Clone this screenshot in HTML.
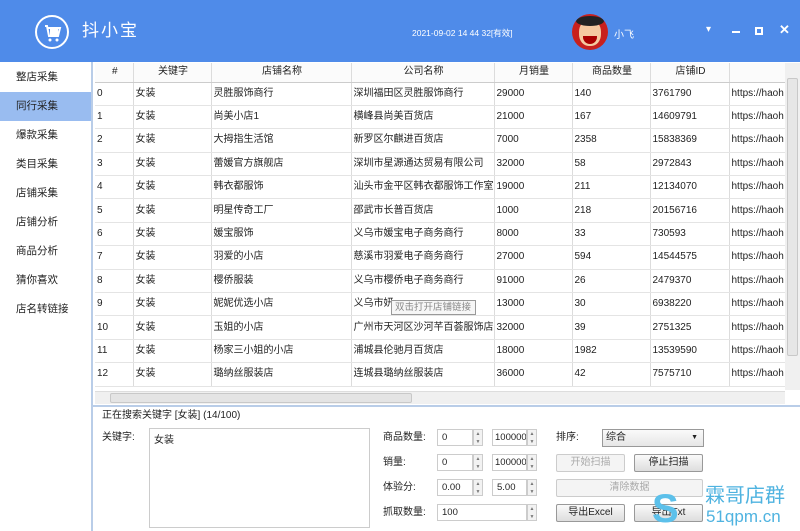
<!DOCTYPE html>
<html><head><meta charset="utf-8"><style>
*{margin:0;padding:0;box-sizing:border-box}
body{width:800px;height:531px;overflow:hidden;background:#fff;font-family:"Liberation Sans","Noto Sans CJK SC",sans-serif;font-size:10px;color:#222;position:relative}
.hdr{position:absolute;left:0;top:0;width:800px;height:62px;background:#4f8be9}
.abs{position:absolute}
.side{position:absolute;left:0;top:62px;width:93px;height:469px;background:#fff;border-right:2px solid #b9cde8}
.side div{height:29px;line-height:29px;padding-left:16px;font-size:10.5px}
.side .sel{background:#99bcf0}
table{border-collapse:collapse;position:absolute;left:95px;top:63px;table-layout:fixed}
td,th{height:23.4px;line-height:14px;vertical-align:middle;border-right:1px solid #dcdcdc;border-bottom:1px solid #e4e4e4;padding:0 0 0 2px;white-space:nowrap;overflow:hidden;font-weight:normal;font-size:10px;text-align:left}
th{height:19px;text-align:center;background:#fbfbfb;border-bottom:1px solid #ccc}
.inp{position:absolute;height:17px;border:1px solid #ccc;background:#fff;font-size:9.5px;padding-left:4px;line-height:15px;overflow:hidden;white-space:nowrap}
.spin{position:absolute;width:10px;height:17px;border:1px solid #ccc;background:#f2f2f2;font-size:5px;color:#777;text-align:center;line-height:8px}
.btn{position:absolute;height:18px;border:1px solid #999;border-radius:2px;background:linear-gradient(#fafafa,#ddd);text-align:center;line-height:16px;font-size:10px}
.dis{color:#aaa;border-color:#ccc;background:#f4f4f4}
.lbl{position:absolute;font-size:10px;line-height:12px}
</style></head><body>
<div class="hdr">
 <svg class="abs" style="left:33px;top:13px" width="38" height="38" viewBox="0 0 38 38"><circle cx="19" cy="19" r="16" fill="none" stroke="#fff" stroke-width="2"/><path d="M12 13h2l2 10h9l2-8H15" fill="none" stroke="#fff" stroke-width="2"/><rect x="17" y="14" width="8" height="8" fill="#fff"/><circle cx="17" cy="27" r="1.5" fill="#fff"/><circle cx="24" cy="27" r="1.5" fill="#fff"/></svg>
 <div class="abs" style="left:82px;top:21px;color:#fff;font-size:17px;letter-spacing:2px;line-height:20px">抖小宝</div>
 <div class="abs" style="left:412px;top:27px;color:#fff;font-size:8.5px">2021-09-02 14 44 32[有效]</div>
 <div class="abs" style="left:572px;top:14px;width:36px;height:36px;border-radius:50%;background:#c8201e;overflow:hidden"><div style="position:absolute;left:7px;top:6px;width:22px;height:26px;border-radius:45%;background:#f5c9a0"></div><div style="position:absolute;left:4px;top:2px;width:28px;height:10px;border-radius:50%;background:#222"></div><div style="position:absolute;left:11px;top:22px;width:14px;height:8px;border-radius:0 0 7px 7px;background:#a00"></div></div>
 <div class="abs" style="left:614px;top:26px;color:#fff;font-size:10px">小飞</div>
 <div class="abs" style="left:706px;top:24px;color:#fff;font-size:10px">▾</div>
 <div class="abs" style="left:732px;top:31px;width:8px;height:2px;background:#fff"></div>
 <div class="abs" style="left:755px;top:27px;width:8px;height:8px;border:2px solid #fff"></div>
 <div class="abs" style="left:779px;top:22px;color:#fff;font-size:13px;font-weight:bold">✕</div>
</div>
<div class="side" style="padding-top:1px">
 <div>整店采集</div><div class="sel">同行采集</div><div>爆款采集</div><div>类目采集</div><div>店铺采集</div><div>店铺分析</div><div>商品分析</div><div>猜你喜欢</div><div>店名转链接</div>
</div>
<table>
<colgroup><col style="width:38px"><col style="width:78px"><col style="width:140px"><col style="width:141px"><col style="width:78px"><col style="width:78px"><col style="width:79px"><col style="width:58px"></colgroup>
<tr><th>#</th><th>关键字</th><th>店铺名称</th><th>公司名称</th><th>月销量</th><th>商品数量</th><th>店铺ID</th><th style="border-right:none"></th></tr>
<tr><td>0</td><td>女装</td><td>灵胜服饰商行</td><td>深圳福田区灵胜服饰商行</td><td>29000</td><td>140</td><td>3761790</td><td>https://haoh</td></tr>
<tr><td>1</td><td>女装</td><td>尚美小店1</td><td>横峰县尚美百货店</td><td>21000</td><td>167</td><td>14609791</td><td>https://haoh</td></tr>
<tr><td>2</td><td>女装</td><td>大拇指生活馆</td><td>新罗区尔麒进百货店</td><td>7000</td><td>2358</td><td>15838369</td><td>https://haoh</td></tr>
<tr><td>3</td><td>女装</td><td>蕾媛官方旗舰店</td><td>深圳市星源通达贸易有限公司</td><td>32000</td><td>58</td><td>2972843</td><td>https://haoh</td></tr>
<tr><td>4</td><td>女装</td><td>韩衣都服饰</td><td>汕头市金平区韩衣都服饰工作室</td><td>19000</td><td>211</td><td>12134070</td><td>https://haoh</td></tr>
<tr><td>5</td><td>女装</td><td>明星传奇工厂</td><td>邵武市长普百货店</td><td>1000</td><td>218</td><td>20156716</td><td>https://haoh</td></tr>
<tr><td>6</td><td>女装</td><td>媛宝服饰</td><td>义乌市媛宝电子商务商行</td><td>8000</td><td>33</td><td>730593</td><td>https://haoh</td></tr>
<tr><td>7</td><td>女装</td><td>羽爱的小店</td><td>慈溪市羽爱电子商务商行</td><td>27000</td><td>594</td><td>14544575</td><td>https://haoh</td></tr>
<tr><td>8</td><td>女装</td><td>樱侨服装</td><td>义乌市樱侨电子商务商行</td><td>91000</td><td>26</td><td>2479370</td><td>https://haoh</td></tr>
<tr><td>9</td><td>女装</td><td>妮妮优选小店</td><td>义乌市妍</td><td>13000</td><td>30</td><td>6938220</td><td>https://haoh</td></tr>
<tr><td>10</td><td>女装</td><td>玉姐的小店</td><td>广州市天河区沙河芊百荟服饰店</td><td>32000</td><td>39</td><td>2751325</td><td>https://haoh</td></tr>
<tr><td>11</td><td>女装</td><td>杨家三小姐的小店</td><td>浦城县伦驰月百货店</td><td>18000</td><td>1982</td><td>13539590</td><td>https://haoh</td></tr>
<tr><td>12</td><td>女装</td><td>璐纳丝服装店</td><td>连城县璐纳丝服装店</td><td>36000</td><td>42</td><td>7575710</td><td>https://haoh</td></tr>
</table>
<div class="abs" style="left:391px;top:300px;width:85px;height:15px;border:1px solid #999;background:#f6f6f6;color:#888;font-size:9.5px;padding-left:3px;line-height:13px">双击打开店铺链接</div>
<div class="abs" style="left:785px;top:63px;width:15px;height:327px;background:#f0f0f0"><div style="position:absolute;left:2px;top:15px;width:11px;height:278px;background:#e6e6e6;border:1px solid #c8c8c8;border-radius:2px"></div></div>
<div class="abs" style="left:95px;top:391px;width:690px;height:13px;background:#f0f0f0;border-top:1px solid #ddd"><div style="position:absolute;left:15px;top:1px;width:302px;height:10px;background:#e4e4e4;border:1px solid #c8c8c8;border-radius:2px"></div></div>
<div class="abs" style="left:93px;top:405px;width:707px;height:2px;background:#b9cde8"></div>
<div class="lbl" style="left:102px;top:410px">正在搜索关键字 [女装] (14/100)</div>
<div class="lbl" style="left:102px;top:432px">关键字:</div>
<div class="abs" style="left:149px;top:428px;width:221px;height:100px;border:1px solid #ccc;padding:2px 4px">女装</div>
<div class="lbl" style="left:383px;top:432px">商品数量:</div>
<div class="lbl" style="left:383px;top:457px">销量:</div>
<div class="lbl" style="left:383px;top:482px">体验分:</div>
<div class="lbl" style="left:383px;top:507px">抓取数量:</div>
<div class="inp" style="left:437px;top:429px;width:36px">0</div><div class="spin" style="left:473px;top:429px">▲<br>▼</div>
<div class="inp" style="left:492px;top:429px;width:35px;padding-left:2px">100000</div><div class="spin" style="left:527px;top:429px">▲<br>▼</div>
<div class="inp" style="left:437px;top:454px;width:36px">0</div><div class="spin" style="left:473px;top:454px">▲<br>▼</div>
<div class="inp" style="left:492px;top:454px;width:35px;padding-left:2px">100000</div><div class="spin" style="left:527px;top:454px">▲<br>▼</div>
<div class="inp" style="left:437px;top:479px;width:36px">0.00</div><div class="spin" style="left:473px;top:479px">▲<br>▼</div>
<div class="inp" style="left:492px;top:479px;width:35px">5.00</div><div class="spin" style="left:527px;top:479px">▲<br>▼</div>
<div class="inp" style="left:437px;top:504px;width:90px">100</div><div class="spin" style="left:527px;top:504px">▲<br>▼</div>
<div class="lbl" style="left:556px;top:432px">排序:</div>
<div class="abs" style="left:602px;top:429px;width:102px;height:18px;border:1px solid #999;background:linear-gradient(#fafafa,#e6e6e6);padding-left:3px;line-height:16px">综合<span style="position:absolute;right:5px;font-size:7px">▼</span></div>
<div class="btn dis" style="left:556px;top:454px;width:69px">开始扫描</div>
<div class="btn" style="left:634px;top:454px;width:69px">停止扫描</div>
<div class="btn dis" style="left:556px;top:479px;width:147px">清除数据</div>
<div class="btn" style="left:556px;top:504px;width:69px">导出Excel</div>
<div class="btn" style="left:634px;top:504px;width:69px">导出Txt</div>
<div class="abs" style="left:652px;top:490px;font-size:40px;font-weight:bold;color:#5cc0ea;line-height:38px">S</div>
<div class="abs" style="left:705px;top:485px;color:#4fb3e0;font-size:20px;line-height:22px">霖哥店群</div>
<div class="abs" style="left:706px;top:507px;color:#4fb3e0;font-size:17px;line-height:20px">51qpm.cn</div>
</body></html>
